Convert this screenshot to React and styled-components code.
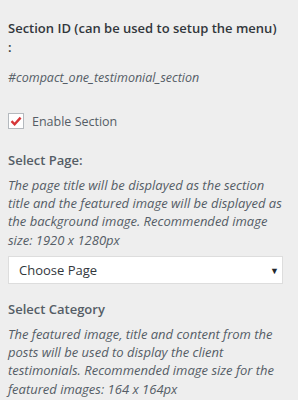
import styled, { createGlobalStyle } from "styled-components";

const Global = createGlobalStyle`
  body {
    margin: 0;
    background: #eeeeee;
    font-family: "Open Sans", "Noto Sans", sans-serif;
  }
`;

const App = () => {
  return (
    <Panel>
      <Global />
      <Control>
        <Title dark>Section ID (can be used to setup the menu) :</Title>
        <SectionId>#compact_one_testimonial_section</SectionId>
      </Control>
      <CheckRow>
        <Box>
          <svg width="12" height="10" viewBox="0 0 12 10">
            <path d="M1.5 5.2 L4.6 8.3 L10.6 1.6" fill="none" stroke="#d63638" strokeWidth="2.4" />
          </svg>
        </Box>
        <CheckLabel>Enable Section</CheckLabel>
      </CheckRow>
      <Control gap={22}>
        <Title>Select Page:</Title>
        <Description>
          The page title will be displayed as the section title and the featured image will be displayed as the background image. Recommended image size: 1920 x 1280px
        </Description>
        <Select>
          <span>Choose Page</span>
          <Arrow>▼</Arrow>
        </Select>
      </Control>
      <Control gap={16}>
        <Title>Select Category</Title>
        <Description>
          The featured image, title and content from the posts will be used to display the client testimonials. Recommended image size for the featured images: 164 x 164px
        </Description>
      </Control>
    </Panel>
  );
};

const Panel = styled.div`
  width: 275px;
  padding: 19px 15px 0 8px;
  display: flex;
  flex-direction: column;
`;

const Control = styled.div`
  display: flex;
  flex-direction: column;
  margin-top: ${props => props.gap || 0}px;
`;

const Title = styled.div`
  font-size: 13px;
  line-height: 18.5px;
  font-weight: 600;
  color: ${props => props.dark ? "#32373c" : "#555d66"};
`;

const SectionId = styled.div`
  margin-top: 12px;
  font-size: 12.5px;
  line-height: 20px;
  font-style: italic;
  color: #555d66;
`;

const CheckRow = styled.label`
  display: flex;
  align-items: center;
  gap: 8px;
  margin-top: 25px;
  height: 16px;
`;

const Box = styled.span`
  width: 14px;
  height: 14px;
  border: 1px solid #b4b9be;
  background: #fff;
  display: flex;
  align-items: center;
  justify-content: center;
`;

const CheckLabel = styled.span`
  font-size: 12.5px;
  color: #555d66;
`;

const Description = styled.div`
  margin-top: 6px;
  font-size: 13px;
  line-height: 18.4px;
  font-style: italic;
  color: #555d66;
`;

const Select = styled.div`
  margin-top: 7px;
  height: 26px;
  border: 1px solid #dddddd;
  background: #fff;
  display: flex;
  align-items: center;
  justify-content: space-between;
  padding: 0 3px 0 10px;
  font-size: 13px;
  color: #32373c;
`;

const Arrow = styled.span`
  font-size: 9px;
  color: #23282d;
`;

export default App;
